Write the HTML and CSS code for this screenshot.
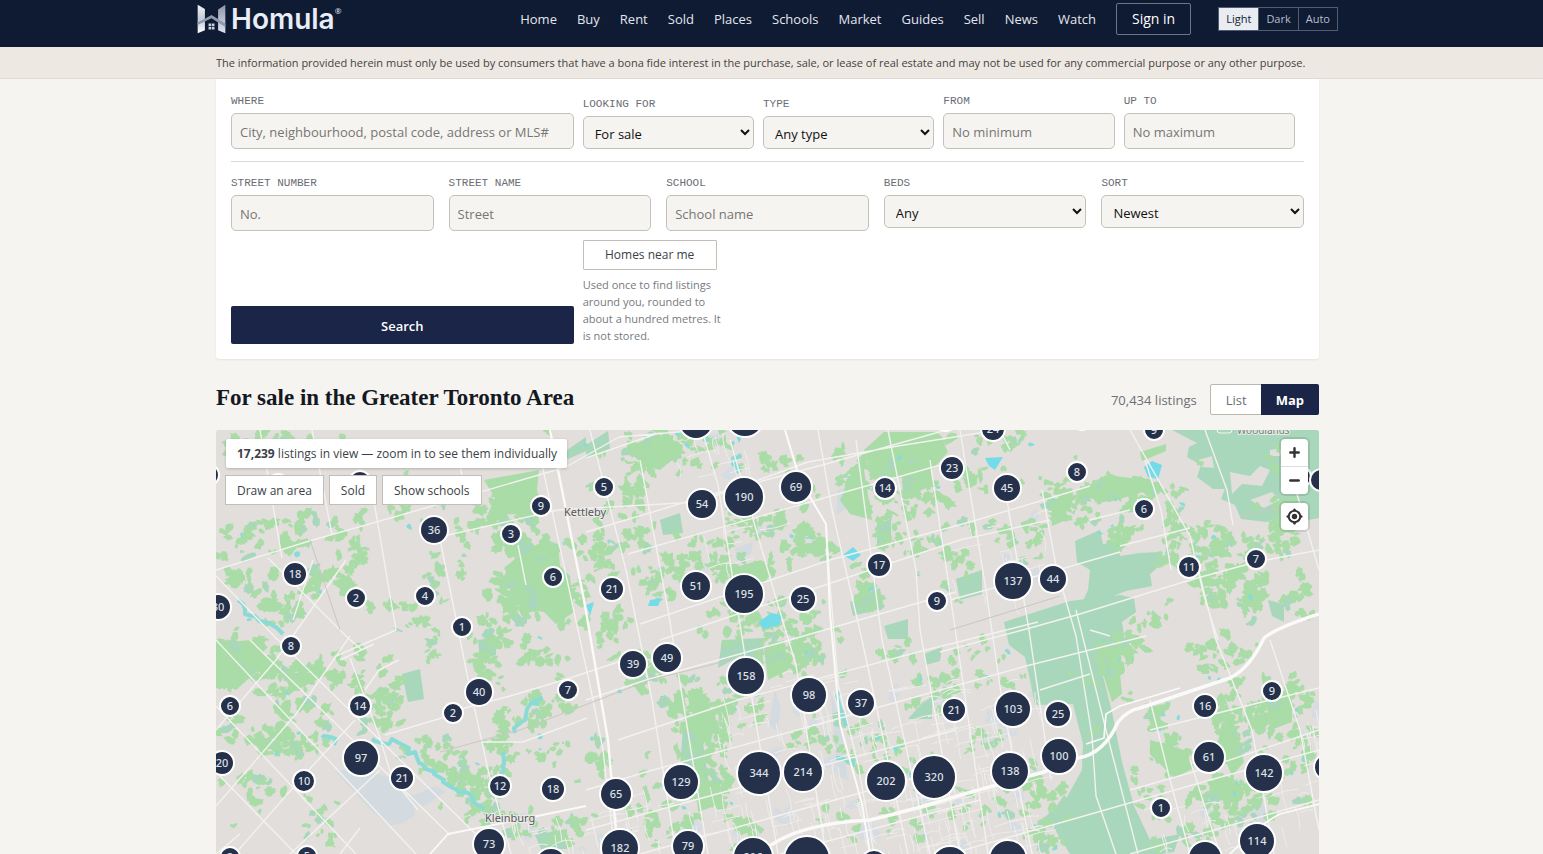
FILE: index.html
```html
<!DOCTYPE html>
<html lang="en">
<head>
<meta charset="utf-8">
<meta name="viewport" content="width=device-width, initial-scale=1">
<title>For sale in the Greater Toronto Area | Homula</title>
<link rel="stylesheet" href="styles.css">
</head>
<body>
<header class="site-header">
  <div class="header-inner">
    <a class="logo" href="#" aria-label="Homula">
      <svg class="logo-mark" viewBox="22 12 88 88" aria-hidden="true">
        <defs>
          <linearGradient id="barLeft" x1="0" y1="0" x2="0" y2="1"><stop offset="0" stop-color="#f2f4f8"/><stop offset=".5" stop-color="#c3cad7"/><stop offset="1" stop-color="#fff"/></linearGradient>
          <linearGradient id="barRight" x1="0" y1="0" x2="0" y2="1"><stop offset="0" stop-color="#8d96a8"/><stop offset="1" stop-color="#dfe4ee"/></linearGradient>
        </defs>
        <path fill="url(#barLeft)" d="M24 13l22 13v64l-22 9z"/>
        <path fill="url(#barRight)" d="M108 13L86 27v63l22 9z"/>
        <path fill="#8f9aae" d="M40 58l26-14 42 26v10L66 54 24 74v-8z"/>
        <path fill="#c8cfdb" d="M57 70h8v8h-8zM67 70h8v8h-8zM57 80h8v8h-8zM67 80h8v8h-8z"/>
      </svg>
      <span class="logo-word">Homula</span><span class="logo-reg">®</span>
    </a>
    <nav class="main-nav" aria-label="Main">
      <a href="#">Home</a><a href="#">Buy</a><a href="#">Rent</a><a href="#">Sold</a><a href="#">Places</a><a href="#">Schools</a><a href="#">Market</a><a href="#">Guides</a><a href="#">Sell</a><a href="#">News</a><a href="#">Watch</a>
      <a class="sign-in" href="#">Sign in</a>
    </nav>
    <div class="theme" role="group" aria-label="Theme">
      <button type="button" class="theme-on" aria-pressed="true">Light</button><button type="button">Dark</button><button type="button">Auto</button>
    </div>
  </div>
</header>
<div class="notice"><p>The information provided herein must only be used by consumers that have a bona fide interest in the purchase, sale, or lease of real estate and may not be used for any commercial purpose or any other purpose.</p></div>
<main class="page">
  <form class="search">
    <div class="field"><label for="where">Where</label><input id="where" type="text" placeholder="City, neighbourhood, postal code, address or MLS#"></div>
    <div class="field"><label for="looking">Looking for</label><select id="looking"><option>For sale</option><option>For rent</option></select></div>
    <div class="field"><label for="type">Type</label><select id="type"><option>Any type</option></select></div>
    <div class="field"><label for="from">From</label><input id="from" type="text" placeholder="No minimum"></div>
    <div class="field"><label for="upto">Up to</label><input id="upto" type="text" placeholder="No maximum"></div>
    <div class="more">
      <div class="field"><label for="number">Street number</label><input id="number" type="text" placeholder="No."></div>
      <div class="field"><label for="street">Street name</label><input id="street" type="text" placeholder="Street"></div>
      <div class="field"><label for="school">School</label><input id="school" type="text" placeholder="School name"></div>
      <div class="field"><label for="beds">Beds</label><select id="beds"><option>Any</option></select></div>
      <div class="field"><label for="sort">Sort</label><select id="sort"><option>Newest</option></select></div>
    </div>
    <button class="submit" type="submit">Search</button>
    <div class="near">
      <button type="button">Homes near me</button>
      <p>Used once to find listings around you, rounded to about a hundred metres. It is not stored.</p>
    </div>
  </form>
  <div class="results-head">
    <h1>For sale in the Greater Toronto Area</h1>
    <span class="count">70,434 listings</span>
    <div class="view"><a href="#">List</a><a class="view-on" href="#" aria-current="page">Map</a></div>
  </div>
  <section class="map" aria-label="Map of listings">
    <svg class="tiles" viewBox="216 430 1103 424" preserveAspectRatio="xMinYMin slice" aria-hidden="true">
      <g id="built" fill="#d6dce2"></g>
      <g fill="#d3dbe0">
        <path d="M335 771l24-2 30 8 24 24 2 14-12 8-14 3-20-18z"/><path d="M402 800l34-14 10 6-22 14zM1248 808l14-6 10 14-4 10-12-4z"/>
        <path d="M838 490l8-3v22l-10 6zM735 548l18-6-2 12-14 6zM775 690l6 18-4 24-8-8zM830 690l10 30 8 60-10-4z"/>
      </g>
      <g fill="#a8d7bb">
        <path d="M1172 430h147v88l-22 4-12-8-18 8-26-3-6-14-14-6 4-10-12 0-16-12 4-12-14-8 2-10 8-4z"/>
        <path d="M1075 541l25-11 3 14 14-2 3 14 20-3 20-1 4 10-14 12 2 12-26 5-26 10-20 7 8-18 2-20-13-8z"/>
        <path d="M1004 622l66-21 50-6 14 3 2 14-14 10 2 14-26 16 4 20 10 40 10 50 12 44 16 34 30-6-6 18-14 2h-90l-16-26 8-22 20-36 1-26-10-40-38 1-6-30-4-18-16-12z"/>
        <path d="M956 579l26-9v24l-22 6zM646 448l32-4 4 14-34 9zM402 674l18-5 4 30-16 3zM478 640l18-3v18l-16 5zM660 520l20-7 3 20-20 2zM877 523l14-4v16l-4 10-10 0zM850 602l30-14 3 20-30 8zM884 626l24-7v20h-20z"/>
        <path d="M683 728l18-2 4 32 8 50-18-10-16-18zM722 640l42-2-2 28-22-10-22 12zM922 703l10-6v22h-24zM924 654l18-7-2 14-14 4zM832 714l12-4 2 18-12-2zM280 663l16 10 12-4-8 14-16-2zM535 835l32-6v20h-26z"/>
        <path d="M1036 825l20-18 8-12 14 14-4 16zM1268 600l16 4v18l-12-6z"/>
        <path d="M586 445l22-14 2 18-24 10zM560 455l26-18v14l-18 8z"/>
      </g>
      <g fill="#e1dedb">
        <path d="M1198 460l14-4 2 12-12-1zM1230 472l20 4 10-10 10 4-8 16-20-2-10 10zM1250 500l22-8 8 8-16 8zM1180 506l8-10 10 2-6 10zM1270 450l12-2-2 8h-10z"/>
      </g>
      <g fill="#a9dca7">
        <path d="M484 480l55-10-2 20 4 20-16 10-10-6-28 2 8-18z"/>
        <path d="M504 568l22-18 20-10 12 4 2 22 10 10 4 36-18 12-12-12-20-4-18-8 6-16z"/>
        <path d="M216 643l36-3 12 14-8 18-20 18-20-10z"/>
        <path d="M626 448l32-14 20 8-2 14-16 14-16-4z"/>
        <path d="M864 450l20-18h54l10 20-14 16-30 10-32-2zM902 476l28-12 3 22-30 10zM840 500l14-34 10 4 8 50-22-6z"/>
        <path d="M764 648l20-8 4 30-20 10zM690 698l12-2 14 22-6 28-14-10zM1075 490l40-14 30 4-2 12-34 10-30-6zM1050 500l18-4-2 24-14 6z"/>
        <path d="M1140 452l26-8v7l-24 10zM1266 700l16-10 10 6v26l-22 8zM1222 722l14 4 8 36-12 14-14-34zM1150 740l34 10 10 18-20 10-24-24zM1206 780l36 4-4 20-22-6zM280 534l14 8 14-4v8l-28 4z"/>
        <path d="M725 570l36-10 12 12-10 12-30 0zM1104 640l14 14 4 40-10 8-14-44zM696 784l24-6v26l-22 8z"/>
      </g>
      <g id="woods"></g>
      <g fill="#74dbe9">
        <path d="M759 622l12-9 12 2-4 10-16 4zM843 555l10-8 8 8-8 6zM985 458l18-1-8 13-6-4zM1144 467l8-6 10 4-4 14-10-2zM650 600l12-2-4 8h-10zM586 605l8-3-4 14zM735 433l10-4-6 14z"/>
      </g>
      <g id="creeks" fill="none" stroke="#8adbd6" stroke-width="4" stroke-linejoin="round"></g>
      <g id="streets" fill="none" stroke="#eeedeb" stroke-width="1"></g>
      <g fill="none" stroke="#f3f2f0" stroke-width="1.4" stroke-linejoin="round">
        <path d="M260 430l22 128M312 430l20 105M372 490l24 140-60 26M439 534l28 140 22 100 22 80M465 500l-8-60M518 545l8 40M541 460l50 230 12 60 12 104M590 430l36 140 26 130 24 154M640 460l28 150 40 244M702 430l16 55 30 190 30 179M730 440l48 165 18 60 30 189M785 430l15 50 26 44 4 60 8 100 20 80 16 90M818 430l14 80 30 130 46 214M856 440l26 200 48 214M888 430l28 140 4 60 40 224M930 460l18 120 40 274M960 430l26 160 16 110 30 154M1007 500l22 130 22 150M1042 490l14 76 20 70 16 100 4 60 20 58M1076 610l30 120 32 124M1130 430l60 106 14 60 14 44M1145 460l16 50 10 60M1205 430l22 60 6 35M1196 560l20 80 36 90 22 124M1290 470l29 100M1150 700l20 80 20 74M1270 640l30 90 19 100M1190 760l30 94M1000 430l10 20"/>
        <path d="M216 570l90-28 130-37 130-38 53-30 82-7M448 535l110-25 140-8 110-40 90-16 100-16M586 458l70-24M586 532l120-36 120-32 120-34M628 554l210-60 120-34M640 624l190-64 140-38 120-36M660 640l180-60 120-40 90-20M940 652l90-24 50-14 110-34 66-18 63-12M950 600l80-22 90-26M586 700l60-20 130-36 180-52M618 740l120-40 180-48 120-30M586 790l60-18 180-50 200-56 120-30M586 830l160-44 210-56M450 712l60-16 60-18 60-20M385 735l60-18M483 742l40 0 64-24M640 854l130-36 180-50M780 854l200-54M950 854l120-34 140-40 109-30M1090 520l40-10M1130 790l70-20 119-40M1090 630l20 6M1130 854l189-54M1120 546l70-18M1040 690l50-16M1150 730l120-30 49-12M365 690l14-20 20-10M216 854l24-20"/>
        <path d="M216 576l60 62 220 216M268 558l80 80 14 12M216 640l200 214M216 706l140 148M216 772l80 82M250 640l200 195M216 730l60-70 70-100M216 806l80-92 54-78M235 854l70-80 50-54M290 854l90-84M340 854l20-26M313 560l-20 60M350 658l30 80 12 40 26 32M340 660l34-16"/>
      </g>
      <g fill="none" stroke="#fbfaf9" stroke-linejoin="round">
        <path stroke-width="2.4" d="M550 430l34 170 24 140 10 114"/>
        <path stroke-width="2" d="M785 430l15 50 26 44 4 90 10 110 22 80 8 50"/>
        <path stroke-width="3.5" d="M760 854q30-30 110-34 50-12 94-26l80-22 34-14q26-4 40-36 10-12 22-14l90-30q20-10 34-40 12-10 55-24"/>
        <path stroke-width="1.8" d="M1086 744l18-6 2-24 14-8 60-18M1230 854q30-30 50-40l39-10M430 854l18-20 70-14 68-14"/>
      </g>
      <path fill="none" stroke="#c9c7c5" stroke-width="1" d="M440 752l80-22 130-50 120-30M950 630l110-34M1240 516l60-12M310 540l30 90"/>
      <rect x="1217" y="424" width="15" height="9" rx="3" fill="#a8d7bb" stroke="#f7f7f5"/>
      <g class="place">
        <text x="564" y="516">Kettleby</text><text x="485" y="822">Kleinburg</text><text class="place-park" x="1237" y="434">Woodlands</text>
      </g>
    </svg>
    <div id="markers" class="markers"></div>
    <div class="map-tools">
      <p class="in-view"><strong>17,239</strong> listings in view — zoom in to see them individually</p>
      <div class="tool-row"><button type="button">Draw an area</button><button type="button">Sold</button><button type="button">Show schools</button></div>
    </div>
    <div class="map-controls">
      <div class="control-group">
        <button type="button" aria-label="Zoom in"><svg viewBox="0 0 29 29"><path d="M14.500 10v9M10 14.500h9" stroke="#333" stroke-width="2.600" stroke-linecap="round"/></svg></button>
        <button type="button" aria-label="Zoom out"><svg viewBox="0 0 29 29"><path d="M10 14.500h9" stroke="#333" stroke-width="2.600" stroke-linecap="round"/></svg></button>
      </div>
      <div class="control-group">
        <button type="button" aria-label="Find my location"><svg viewBox="0 0 20 20"><path fill="#333" d="M10 4C9 4 9 5 9 5v.1A5 5 0 0 0 5.100 9H5s-1 0-1 1 1 1 1 1h.1A5 5 0 0 0 9 14.900v.1s0 1 1 1 1-1 1-1v-.1a5 5 0 0 0 3.900-3.900h.1s1 0 1-1-1-1-1-1h-.1A5 5 0 0 0 11 5.100V5s0-1-1-1m0 2.500a3.500 3.500 0 1 1 0 7 3.500 3.500 0 1 1 0-7"/><circle cx="10" cy="10" r="2" fill="#333"/></svg></button>
      </div>
    </div>
  </section>
</main>
<script src="map.js"></script>
</body>
</html>
```

FILE: styles.css
```css
* { box-sizing: border-box; }
body {
  margin: 0;
  min-height: 100vh;
  display: flex;
  flex-direction: column;
  background: #f6f4f0;
  color: #14181f;
  font: 13px/18px "Open Sans", "Noto Sans", sans-serif;
}
button, input, select { font: inherit; color: inherit; }
button { cursor: pointer; }
a { color: inherit; text-decoration: none; }
p, h1 { margin: 0; }

.site-header { background: #0f1a33; padding: 0 8px 9px 0; }
.header-inner {
  width: 100%;
  max-width: 1141px;
  height: 38px;
  margin: 0 auto;
  display: flex;
  align-items: center;
}
.logo { display: flex; align-items: center; color: #e9edf6; }
.logo-mark { width: 29px; height: 30px; margin-right: 5px; }
.logo-word { font: 600 28px/30px Inter, sans-serif; }
.logo-reg { align-self: flex-start; font-size: 8px; line-height: 14px; }
.main-nav {
  margin-left: auto;
  display: flex;
  align-items: center;
  gap: 20px;
  color: #e3e6ed;
}
.main-nav .sign-in {
  padding: 6px 15px;
  border: 1px solid #6d7688;
  border-radius: 2px;
  color: #fff;
  font-size: 14px;
}
.theme { margin-left: 27px; display: flex; border: 1px solid #525c70; }
.theme button {
  padding: 2px 7px;
  border: 0;
  border-left: 1px solid #525c70;
  background: none;
  color: #b9bfcc;
  font-size: 11px;
}
.theme button:first-child { border-left: 0; }
.theme .theme-on { background: #e9ecf1; color: #0f1a33; }

.notice {
  padding: 7px 8px 6px 0;
  background: #ede9e2;
  border-bottom: 1px solid #e0dbd2;
  color: #45423f;
}
.notice p { width: 100%; max-width: 1103px; margin: 0 auto; font-size: 11px; }

.page { flex: 1; display: flex; flex-direction: column; padding-right: 8px; }
.search, .results-head, .map { width: 100%; max-width: 1103px; margin: 0 auto; }

.search {
  display: grid;
  grid-template-columns: 2fr 1fr 1fr 1fr 1fr auto;
  gap: 9px;
  align-items: end;
  padding: 15px;
  background: #fff;
  border-radius: 0 0 3px 3px;
  box-shadow: 0 1px 2px #14181f14;
}
.field { display: flex; flex-direction: column; gap: 5px; min-width: 0; }
.field label {
  font: 11px/14px "Liberation Mono", monospace;
  text-transform: uppercase;
  color: #6a6d73;
}
.field input, .field select {
  width: 100%;
  border: 1px solid #c4c1ba;
  border-radius: 5px;
  background-color: #f6f4f0;
}
.field input { height: 36px; padding: 4px 8px 2px; }
.field input::placeholder { color: #767676; }
.field select { height: 33px; padding: 3px 7px 1px; color: #111; }
.more {
  grid-column: 1 / -1;
  display: grid;
  grid-template-columns: repeat(5, 1fr);
  gap: 15px;
  align-items: start;
  margin-top: 3px;
  padding-top: 14px;
  border-top: 1px solid #dddad4;
}
.submit {
  height: 38px;
  padding: 2px 0 0;
  border: 0;
  border-radius: 2px;
  background: #1a2547;
  color: #fff;
  font-weight: 600;
}
.near { width: 140px; }
.near button {
  width: 134px;
  height: 30px;
  border: 1px solid #c4bfb6;
  border-radius: 1px;
  background: #fff;
  color: #3b3f47;
  font-size: 12px;
}
.near p { padding-top: 6px; font-size: 11px; line-height: 17px; color: #767a80; }

.results-head { display: flex; align-items: center; padding: 25px 0 15px; }
.results-head h1 { flex: 1; padding-bottom: 4px; font: bold 23px/27px "Palatino Linotype", "Liberation Serif", serif; }
.count { color: #6c6f74; }
.view { display: flex; margin-left: 13px; background: #fff; border: 1px solid #bdb8ae; border-radius: 2px; }
.view a { padding: 6px 15px 5px; color: #6c6f74; }
.view .view-on { margin: -1px; padding: 7px 15px 6px; border-radius: 0 2px 2px 0; background: #1a2547; color: #fff; font-weight: 700; }

.map {
  position: relative;
  flex: 1;
  min-height: 320px;
  overflow: hidden;
  border-radius: 3px 3px 0 0;
  background: #e1dedb;
}
.tiles { position: absolute; inset: 0; width: 100%; height: 100%; }
.place { font: 11px "Noto Sans", sans-serif; fill: #55575c; stroke: #ecebe8; stroke-width: 2px; paint-order: stroke; }
.place .place-park { font-size: 10px; fill: #6b8177; }
.markers button {
  position: absolute;
  transform: translate(-50%, -50%);
  padding: 0;
  border: 2px solid #fff;
  border-radius: 50%;
  background: #25304a;
  color: #dfe2e8;
  font: 500 11px/16px "Noto Sans", sans-serif;
}
.map-tools { position: absolute; top: 9px; left: 10px; display: flex; flex-direction: column; align-items: flex-start; gap: 8px; }
.in-view { padding: 6px 10px 5px 11px; background: #fff; border-radius: 2px; box-shadow: 0 1px 3px #0003; color: #3b3f47; font-size: 12px; }
.tool-row { display: flex; gap: 7px; }
.tool-row button { height: 28px; padding: 1px 11px 0; border: 0; background: #fff; box-shadow: 0 0 0 1px #c4bfb6; color: #3b3f47; font-size: 12px; }
.map-controls { position: absolute; top: 9px; right: 11px; display: flex; flex-direction: column; gap: 9px; }
.control-group { width: 27px; border-radius: 4px; background: #fff; box-shadow: 0 0 0 2px #0000001a; overflow: hidden; }
.control-group button { display: block; width: 27px; height: 27px; padding: 0; border: 0; background: none; }
.control-group button + button { height: 28px; border-top: 1px solid #ddd; }
.control-group svg { display: block; width: 100%; height: 100%; }
```

FILE: map.js
```js
// Map origin within the projected coordinate space.
const ORIGIN = { x: 216, y: 430 };

// x, y, radius, number of listings
const clusters = [
  [696, 422, 18, ""], [745, 418, 20, ""], [946, 420, 12, ""], [993, 429, 13, 24], [1154, 430, 11, 9], [1082, 420, 11, ""],
  [952, 468, 13, 23], [1077, 472, 11, 8], [1007, 488, 15, 45], [796, 487, 17, 69], [702, 504, 16, 54], [744, 497, 21, 190],
  [885, 488, 12, 14], [604, 487, 11, 5], [541, 506, 11, 9], [511, 534, 11, 3], [434, 530, 15, 36], [1144, 509, 11, 6],
  [208, 475, 12, ""], [278, 485, 12, ""], [360, 482, 12, ""], [1300, 477, 12, ""], [1321, 480, 12, ""],
  [295, 574, 13, 18], [356, 598, 11, 2], [425, 596, 11, 4], [553, 577, 11, 6], [612, 589, 13, 21], [696, 586, 16, 51],
  [744, 594, 21, 195], [803, 599, 14, 25], [879, 565, 13, 17], [937, 601, 11, 9], [1013, 581, 20, 137], [1053, 579, 15, 44],
  [1189, 567, 12, 11], [1256, 559, 11, 7], [218, 607, 14, 30], [462, 627, 11, 1], [291, 646, 11, 8], [633, 664, 15, 39],
  [667, 658, 16, 49], [746, 676, 20, 158], [809, 695, 19, 98], [861, 703, 15, 37], [954, 710, 13, 21], [1013, 709, 19, 103],
  [1058, 714, 14, 25], [1205, 706, 13, 16], [1272, 691, 11, 9], [568, 690, 11, 7], [479, 692, 15, 40], [453, 713, 11, 2],
  [360, 706, 12, 14], [230, 706, 11, 6], [222, 763, 13, 20], [361, 758, 19, 97], [402, 778, 13, 21], [304, 781, 12, 10],
  [500, 786, 12, 12], [553, 789, 13, 18], [616, 794, 17, 65], [681, 782, 19, 129], [759, 773, 23, 344], [803, 772, 21, 214],
  [886, 781, 21, 202], [934, 777, 23, 320], [1010, 771, 20, 138], [1059, 756, 19, 100], [1209, 757, 17, 61],
  [1264, 773, 20, 142], [1161, 808, 11, 1], [1257, 841, 19, 114], [1327, 767, 14, ""], [489, 844, 17, 73], [620, 848, 20, 182],
  [688, 846, 17, 79], [230, 857, 11, 2], [307, 856, 11, 5], [551, 864, 17, ""], [753, 857, 21, 206], [807, 859, 24, ""],
  [874, 863, 14, ""], [950, 865, 20, ""], [1008, 859, 20, ""], [1205, 858, 18, ""]
];

const layer = document.getElementById("markers");
for (const [x, y, r, n] of clusters) {
  const b = document.createElement("button");
  b.type = "button";
  b.textContent = n;
  if (n === "") b.setAttribute("aria-label", "Listings");
  b.style.cssText = `left:${x - ORIGIN.x}px;top:${y - ORIGIN.y}px;width:${r * 2}px;height:${r * 2}px`;
  layer.append(b);
}

// Seeded generator so that the terrain is the same on every load.
let seed = 7;
function rnd() {
  seed = (seed * 1664525 + 1013904223) % 4294967296;
  return seed / 4294967296;
}

// centre x, centre y, half width, half height, patches, patch size
const woods = [
  [265, 535, 50, 26, 20, 6], [300, 525, 40, 20, 10, 7], [360, 555, 20, 22, 10, 6], [330, 585, 35, 15, 14, 8], [285, 605, 40, 30, 22, 7],
  [240, 575, 24, 20, 8, 7], [390, 515, 60, 15, 14, 5], [434, 575, 8, 26, 9, 5], [395, 605, 50, 8, 12, 5], [425, 625, 16, 8, 5, 5],
  [465, 555, 6, 30, 10, 4], [500, 515, 40, 26, 26, 7], [530, 585, 44, 46, 50, 8], [490, 630, 30, 14, 12, 6], [300, 440, 90, 10, 16, 5],
  [235, 450, 20, 20, 6, 6], [245, 665, 36, 30, 30, 8], [300, 690, 50, 30, 34, 7], [280, 740, 60, 22, 34, 7], [345, 670, 15, 25, 12, 6],
  [390, 690, 20, 26, 20, 6], [380, 720, 26, 16, 14, 6], [430, 755, 40, 18, 24, 5], [470, 780, 30, 20, 26, 6], [490, 810, 24, 22, 20, 6],
  [485, 660, 16, 20, 12, 6], [540, 655, 30, 20, 18, 6], [535, 710, 36, 20, 26, 6], [500, 745, 12, 40, 20, 6], [555, 750, 30, 16, 10, 5],
  [435, 650, 14, 10, 7, 5], [320, 820, 20, 25, 12, 5], [265, 790, 20, 20, 10, 6], [555, 830, 40, 20, 18, 6], [240, 780, 20, 8, 5, 5],
  [600, 510, 12, 50, 14, 5], [632, 480, 12, 40, 18, 6], [650, 450, 30, 20, 24, 7], [605, 560, 20, 30, 18, 6], [650, 570, 24, 30, 20, 6],
  [640, 530, 40, 8, 8, 5], [610, 625, 30, 16, 14, 6], [700, 450, 30, 26, 20, 5], [690, 560, 20, 24, 14, 6], [738, 560, 40, 20, 22, 6],
  [750, 525, 20, 20, 12, 5], [790, 535, 30, 26, 20, 7], [815, 545, 20, 16, 12, 7], [800, 620, 36, 24, 26, 6], [740, 625, 40, 20, 22, 6],
  [775, 465, 30, 12, 14, 5], [860, 480, 24, 30, 26, 7], [910, 455, 40, 24, 40, 7], [915, 500, 40, 16, 24, 6], [885, 530, 16, 22, 10, 6],
  [860, 585, 24, 20, 16, 6], [930, 545, 26, 20, 14, 5], [955, 570, 20, 30, 14, 5], [970, 475, 20, 16, 14, 6], [1000, 440, 36, 14, 16, 5],
  [1065, 505, 24, 24, 26, 6], [1110, 495, 40, 16, 34, 6], [1115, 535, 30, 16, 22, 6], [1155, 495, 18, 10, 10, 5], [1175, 515, 14, 30, 22, 5],
  [1200, 540, 30, 20, 24, 5], [1235, 540, 36, 14, 24, 6], [1280, 530, 24, 30, 24, 6], [1230, 575, 24, 14, 18, 6], [1255, 600, 14, 30, 26, 6],
  [1210, 595, 20, 20, 18, 6], [1275, 455, 36, 20, 4, 6], [1190, 560, 40, 10, 12, 5], [1300, 600, 14, 30, 12, 6], [1000, 530, 40, 16, 14, 5],
  [1030, 550, 14, 20, 10, 5], [1145, 620, 20, 10, 8, 5], [1115, 660, 22, 36, 30, 7], [1140, 645, 20, 10, 8, 5], [1165, 720, 24, 16, 16, 6],
  [1170, 755, 20, 20, 20, 6], [1230, 720, 20, 40, 40, 6], [1250, 790, 30, 18, 22, 6], [1270, 710, 22, 36, 34, 6], [1300, 700, 16, 24, 12, 6],
  [1205, 665, 16, 20, 10, 5], [1230, 650, 30, 14, 10, 6], [1215, 790, 30, 16, 18, 6], [1190, 825, 40, 24, 22, 6], [1240, 815, 30, 10, 14, 5],
  [1150, 790, 20, 20, 10, 5], [980, 650, 30, 12, 8, 5], [1005, 680, 40, 12, 8, 5], [900, 655, 20, 14, 8, 6], [940, 690, 26, 26, 18, 6],
  [780, 655, 30, 16, 22, 7], [810, 650, 16, 22, 18, 6], [640, 670, 30, 22, 18, 6], [690, 705, 30, 26, 26, 7], [710, 730, 22, 26, 28, 7],
  [740, 710, 26, 18, 16, 6], [700, 770, 24, 30, 22, 6], [720, 785, 16, 20, 12, 6], [600, 750, 14, 26, 10, 6], [650, 810, 20, 40, 18, 5],
  [745, 825, 16, 24, 12, 6], [690, 815, 16, 20, 10, 6], [820, 735, 30, 20, 14, 5], [860, 740, 30, 30, 14, 5], [900, 760, 36, 20, 12, 5],
  [870, 820, 50, 20, 16, 5], [950, 810, 40, 20, 14, 5], [1030, 790, 40, 30, 24, 6], [985, 740, 30, 20, 10, 5], [1045, 835, 20, 18, 16, 6],
  [1300, 760, 16, 40, 16, 6], [768, 465, 550, 34, 26, 4], [768, 650, 550, 200, 70, 4]
];

// An angular lump with an uneven outline.
function patch(cx, cy, size) {
  const points = [];
  const count = 14 + Math.floor(rnd() * 6);
  const w = size * (0.4 + rnd() * 0.8);
  const h = size * (0.35 + rnd() * 0.8);
  const tilt = rnd() - 0.5;
  for (let i = 0; i < count; i++) {
    const a = (i / count) * Math.PI * 2;
    const r = 0.6 + rnd() * 0.5;
    const px = Math.cos(a) * w * r;
    const py = Math.sin(a) * h * r + px * tilt;
    points.push(`${(cx + px).toFixed(1)},${(cy + py).toFixed(1)}`);
  }
  return points.join(" ");
}

let woodsMarkup = "";
for (const [cx, cy, rx, ry, n, size] of woods) {
  for (let i = 0; i < n; i++) {
    const x = cx + (rnd() + rnd() - 1) * rx * 1.2;
    const y = cy + (rnd() + rnd() - 1) * ry * 1.2;
    const k = rnd();
    const fill = k < 0.86 ? "#a9dca7" : k < 0.95 ? "#a8d7bb" : "#86dcd9";
    const s = k > 0.95 ? 3 : size;
    woodsMarkup += `<polygon points="${patch(x, y, s)}" fill="${fill}"/>`;
    if (k < 0.95) woodsMarkup += `<polygon points="${patch(x + rnd() * s * 2 - s, y + rnd() * s * 2 - s, s * 0.7)}" fill="${fill}"/>`;
  }
}
document.getElementById("woods").innerHTML = woodsMarkup;

// River valleys, drawn as jittered lines.
const rivers = [
  [[372, 740], [400, 742], [424, 765], [444, 785], [470, 795], [486, 815]],
  [[512, 735], [530, 705], [545, 695]], [[318, 735], [342, 745]], [[500, 790], [506, 740]],
  [[740, 452], [732, 462], [740, 476]], [[236, 600], [256, 618], [290, 640]], [[838, 755], [858, 770]], [[838, 690], [846, 738]]
];
let creekMarkup = "";
for (const line of rivers) {
  let d = "";
  for (let i = 0; i < line.length - 1; i++) {
    for (let t = 0; t < 1; t += 0.2) {
      const x = line[i][0] + (line[i + 1][0] - line[i][0]) * t + rnd() * 8 - 4;
      const y = line[i][1] + (line[i + 1][1] - line[i][1]) * t + rnd() * 8 - 4;
      d += `${d ? "L" : "M"}${Math.round(x)} ${Math.round(y)}`;
    }
  }
  creekMarkup += `<path d="${d}"/>`;
}
document.getElementById("creeks").innerHTML = creekMarkup;

// Local streets in the built-up areas: centre, half size, count.
const towns = [
  [715, 455, 40, 24, 16], [725, 545, 35, 30, 10], [1000, 560, 50, 50, 20], [780, 720, 70, 50, 40], [880, 740, 70, 60, 46],
  [980, 730, 60, 50, 56], [970, 810, 70, 44, 60], [700, 820, 120, 34, 60], [870, 825, 90, 30, 50], [570, 835, 60, 20, 20],
  [1290, 770, 30, 60, 20], [1200, 830, 60, 24, 16]
];
let streetMarkup = "";
let builtMarkup = "";
for (const [cx, cy, rx, ry, n] of towns) {
  for (let i = 0; i < n; i++) {
    const x = Math.round(cx + (rnd() * 2 - 1) * rx);
    const y = Math.round(cy + (rnd() * 2 - 1) * ry);
    const l = Math.round(10 + rnd() * 22);
    const down = rnd() < 0.5;
    const end = down ? `q${Math.round(rnd() * 8 - 2)} ${l >> 1} ${l >> 2} ${l}` : `q${l >> 1} ${-Math.round(rnd() * 8)} ${l} ${-(l >> 2)}`;
    streetMarkup += `<path d="M${x} ${y}${end}"/>`;
    if (i % 8 === 0) builtMarkup += `<polygon points="${patch(x, y, 10)}"/>`;
  }
}
document.getElementById("streets").innerHTML = streetMarkup;
document.getElementById("built").innerHTML = builtMarkup;
```
